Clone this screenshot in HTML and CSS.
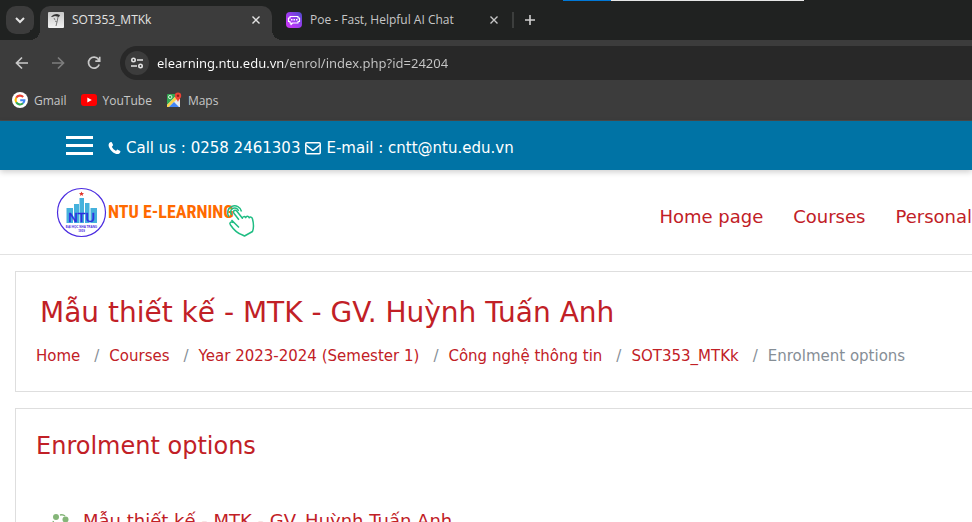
FILE: index.html
```html
<!DOCTYPE html>
<html lang="en">
<head>
<meta charset="utf-8">
<title>SOT353_MTKk</title>
<link rel="stylesheet" href="styles.css">
</head>
<body>
<div class="browser">
  <div class="tabstrip">
    <div class="window-edge"></div>
    <button class="tab-search" aria-label="Search tabs">
      <svg width="12" height="12" viewBox="0 0 12 12" fill="none" stroke="#e3e3e3" stroke-width="2"><path d="M2 4l4 4 4-4"/></svg>
    </button>
    <div class="tab tab-active">
      <svg class="favicon" width="16" height="16" viewBox="0 0 16 16"><defs><linearGradient id="metal" x2="0" y2="1"><stop stop-color="#c8c8c8"/><stop offset="1" stop-color="#f2f2f2"/></linearGradient></defs><rect width="16" height="16" rx="1" fill="url(#metal)"/><path d="M3 5q2-3 6-3l3 1-1 2-4-1-3 1z" fill="#333"/><path d="M6 6l1 2M10 5l-1 5-2-1M9 10l-1 4" stroke="#777" fill="none"/></svg>
      <span class="tab-title">SOT353_MTKk</span>
      <button class="tab-close" aria-label="Close tab"><svg width="8" height="8" viewBox="0 0 8 8" stroke="currentColor" stroke-width="1.4"><path d="M.5.5l7 7M7.500.5l-7 7"/></svg></button>
    </div>
    <div class="tab">
      <svg class="favicon" width="16" height="16" viewBox="0 0 16 16"><defs><linearGradient id="poe" x1="0" y1="1" x2="1" y2="0"><stop stop-color="#d034f5"/><stop offset=".5" stop-color="#9c3cf0"/><stop offset="1" stop-color="#4a4bc8"/></linearGradient></defs><rect width="16" height="16" rx="4" fill="url(#poe)"/><path d="M4 4.500h8v1.500h1.500v3.500H12V11H6.500L5 12.500V11H4V9.500H2.500V6H4z" fill="none" stroke="#fff" stroke-width="1.200" stroke-linejoin="round"/><path d="M5 7.700h1.500M7.500 7.700H9M10 7.700h1.500" stroke="#fff" stroke-width="1.600"/></svg>
      <span class="tab-title">Poe - Fast, Helpful AI Chat</span>
      <button class="tab-close" aria-label="Close tab"><svg width="8" height="8" viewBox="0 0 8 8" stroke="currentColor" stroke-width="1.4"><path d="M.5.5l7 7M7.500.5l-7 7"/></svg></button>
    </div>
    <button class="new-tab" aria-label="New tab"><svg width="10" height="10" viewBox="0 0 10 10" stroke="#d0d0d0" stroke-width="1.600"><path d="M5 0v10M0 5h10"/></svg></button>
  </div>
  <div class="toolbar">
    <button class="tool" aria-label="Back"><svg width="16" height="16" viewBox="0 0 16 16" fill="none" stroke="#c9c9c9" stroke-width="1.700"><path d="M14 8H3M8 2.500L2.500 8 8 13.500"/></svg></button>
    <button class="tool" aria-label="Forward"><svg width="16" height="16" viewBox="0 0 16 16" fill="none" stroke="#7d7d7d" stroke-width="1.700"><path d="M2 8h11M8 2.500L13.500 8 8 13.500"/></svg></button>
    <button class="tool" aria-label="Reload"><svg width="16" height="16" viewBox="0 0 16 16" fill="none" stroke="#c9c9c9" stroke-width="1.700"><path d="M13.200 9.500A5.500 5.500 0 1 1 12.500 4.500L13.500 6M13.700 1.800V6.200H9.300"/></svg></button>
    <div class="omnibox">
      <button class="site-info" aria-label="View site information"><svg width="14" height="14" viewBox="0 0 14 14" fill="none" stroke="#e3e3e3" stroke-width="1.600"><circle cx="3.500" cy="4" r="1.700"/><path d="M7 4h6M1 10h6"/><circle cx="10.500" cy="10" r="1.700"/></svg></button>
      <input class="url" type="text" aria-label="Address" value="elearning.ntu.edu.vn/enrol/index.php?id=24204">
    </div>
  </div>
  <div class="bookmarks">
    <a class="bookmark" href="#"><svg width="16" height="16" viewBox="0 0 16 16" fill="none" stroke-width="2.100"><circle cx="8" cy="8" r="8" fill="#fff"/><path d="M4.200 5.800A4.400 4.400 0 0 1 11.200 5" stroke="#ea4335"/><path d="M4.200 5.800a4.400 4.400 0 0 0 0 4.400" stroke="#fbbc05"/><path d="M4.200 10.200a4.400 4.400 0 0 0 6.800 1.100" stroke="#34a853"/><path d="M11 11.300A4.400 4.400 0 0 0 12.400 8.200H8.200" stroke="#4285f4"/></svg>Gmail</a>
    <a class="bookmark" href="#"><svg width="16" height="16" viewBox="0 0 16 16"><rect y="2" width="16" height="12" rx="3" fill="#f00"/><path d="M6.300 5.500v5L10.800 8z" fill="#fff"/></svg>YouTube</a>
    <a class="bookmark" href="#"><svg width="16" height="16" viewBox="0 0 16 16"><rect x="1" y="2" width="13" height="13" rx="1" fill="#34a853"/><path d="M1 13L12 2h2v13H1z" fill="#e8eaed"/><path d="M1 13L9 5l2 2-8 8H1z" fill="#fbd34c"/><path d="M3 15l5-5 5 5z" fill="#4285f4"/><circle cx="4.200" cy="5" r="1.700" fill="none" stroke="#d5f0dc"/><path d="M8.800 3.800a3.200 3.200 0 0 1 6.400 0c0 2.600-2.400 3.300-3.200 6.200-.8-2.900-3.200-3.600-3.200-6.200z" fill="#ea4335"/><circle cx="12" cy="3.700" r="1.200" fill="#8c1d18"/></svg>Maps</a>
  </div>
</div>

<div class="page">
  <div class="topbar">
    <button class="menu" aria-label="Menu"><span></span><span></span><span></span></button>
    <div class="contact">
      <svg width="13" height="14" viewBox="0 0 13 14"><path d="M1 2.500C1.500 1.500 2.600 1 3.200 1c.4 0 .6.300.8.800l1 2c.3.600-.1.900-.7 1.400-.5.400-.4.700-.2 1.100.8 1.400 1.900 2.500 3.300 3.300.5.300.7.200 1-.2.500-.6.900-1 1.400-.7l2 1c.5.200.6.400.6.800 0 .800-.6 1.800-1.400 2.200-1.300.6-2.600.4-3.900-.2C4.300 11.300 2.500 9.500 1.200 6.600.600 5.200.3 3.800 1 2.500z" fill="#fff"/></svg>
      <span>Call us : 0258 2461303</span>
      <svg width="16" height="14" viewBox="0 0 16 14" fill="none" stroke="#fff" stroke-width="1.500"><rect x=".8" y="1.800" width="14.400" height="11" rx="1"/><path d="M1 4l6 4.800q1 .7 2 0L15 4"/></svg>
      <span>E-mail : cntt@ntu.edu.vn</span>
    </div>
  </div>
  <header class="header">
    <a class="brand" href="#" aria-label="NTU E-Learning">
      <svg width="200" height="52" viewBox="0 0 200 52">
        <circle cx="25.500" cy="25.500" r="24" fill="#fff" stroke="#4a2be0" stroke-width="1.200"/>
        <path d="M10.500 21h6.500v15h-6.500zM18 17h5v19h-5zM23.500 11h4.500v25h-4.500zM29 16h4.500v20H29zM34.500 21h6.500v15h-6.500z" fill="#45b1dc"/>
        <path d="M25.500 4.500l.7 1.600 1.800.1-1.400 1.200.5 1.700-1.600-1-1.600 1 .5-1.700-1.400-1.200 1.800-.1z" fill="#e0352b"/>
        <text x="25.500" y="35" class="seal-name">NTU</text>
        <text x="25.500" y="40.500" class="seal-small">ĐẠI HỌC NHA TRANG</text>
        <text x="25.500" y="45" class="seal-small">1959</text>
        <text x="52" y="31" class="brand-text">NTU E-LEARNING</text>
        <g fill="none" stroke="#1fbd83" stroke-width="1.500" stroke-linejoin="round">
          <path d="M183 40.500l-7.500-7.500M177.500 35.500c-3-1.500-4.500.5-3 2.500 3 4.500 7 8.500 12 10l2 1 8-4.500c1.500-4 1.200-8 0-12.500-.5-2-2.400-2.600-3.300-1.200-.9-2-2.700-2-3.500-.2-1.100-1.600-3-1.200-3.300.6l-5.500-7c-1.500-2-4.500-.5-3 2l5 6.500"/>
          <path d="M173 30a7 7 0 1 1 12.500-5.500M176 28a4 4 0 1 1 6.500-4"/>
        </g>
      </svg>
    </a>
    <nav class="nav"><a href="#">Home page</a><a href="#">Courses</a><a href="#">Personal</a></nav>
  </header>
  <main class="content">
    <section class="card">
      <h1>Mẫu thiết kế - MTK - GV. Huỳnh Tuấn Anh</h1>
      <ol class="breadcrumb">
        <li><a href="#">Home</a></li>
        <li><a href="#">Courses</a></li>
        <li><a href="#">Year 2023-2024 (Semester 1)</a></li>
        <li><a href="#">Công nghệ thông tin</a></li>
        <li><a href="#">SOT353_MTKk</a></li>
        <li>Enrolment options</li>
      </ol>
    </section>
    <section class="card">
      <h2>Enrolment options</h2>
      <h3 class="course"><svg width="18" height="18" viewBox="0 0 18 18" fill="#84b578"><circle cx="4" cy="5" r="3"/><circle cx="13.500" cy="7.500" r="3"/><circle cx="5" cy="14" r="3"/><path d="M8 3q3-1 5 1M1.500 9q-1 2 .5 4M9 15q4 0 5-4" fill="none" stroke="#84b578" stroke-width="1.500"/></svg><a href="#">Mẫu thiết kế - MTK - GV. Huỳnh Tuấn Anh</a></h3>
    </section>
  </main>
</div>
</body>
</html>
```
FILE: styles.css
```css
* { box-sizing: border-box; }
html, body { height: 100%; }
body {
  margin: 0;
  overflow: hidden;
  display: flex;
  flex-direction: column;
  background: #fff;
  font-family: "DejaVu Sans", Verdana, sans-serif;
}
button { border: 0; padding: 0; background: none; display: flex; align-items: center; justify-content: center; }
a { text-decoration: none; color: #c12026; }
svg { display: block; flex: none; }

/* Browser frame */
.browser {
  flex: none;
  background: #3c3c3c;
  border-bottom: 1px solid #4a4a4a;
  font-family: "Open Sans", "Noto Sans", sans-serif;
  font-size: 12px;
  color: #e3e3e3;
}
.tabstrip {
  position: relative;
  display: flex;
  align-items: center;
  height: 40px;
  padding: 0 6px;
  background: #202221;
}
.window-edge {
  position: absolute;
  top: 0;
  left: 58%;
  right: 17%;
  margin-left: -1px;
  margin-right: 3px;
  height: 1px;
  background: linear-gradient(90deg, #0078d7 20%, #e6e6e6 20%);
}
.tab-search { width: 28px; height: 28px; border-radius: 10px; background: #3c3c3c; }
.tab {
  position: relative;
  display: flex;
  align-items: center;
  width: 232px;
  height: 34px;
  padding: 0 12px 6px 8px;
  margin: 6px 0 0 6px;
  color: #c7c7c7;
}
.tab-active { background: #3c3c3c; border-radius: 10px 10px 0 0; color: #e3e3e3; }
.tab-active::before, .tab-active::after {
  content: "";
  position: absolute;
  bottom: 0;
  width: 10px;
  height: 10px;
}
.tab-active::before { right: 100%; background: radial-gradient(circle at 0 0, #202221 10px, #3c3c3c 10px); }
.tab-active::after { left: 100%; background: radial-gradient(circle at 100% 0, #202221 10px, #3c3c3c 10px); }
.tab-title { flex: 1; margin-left: 8px; font-size: 12px; line-height: 16px; white-space: nowrap; }
.tab-close { color: inherit; }
.new-tab { height: 16px; padding-left: 11px; margin-left: 2px; border-left: 2px solid #3c3e3d; }

.toolbar { display: flex; align-items: center; gap: 20px; padding: 6px 0 6px 14px; }
.omnibox {
  flex: 1;
  display: flex;
  align-items: center;
  height: 34px;
  margin-left: -2px;
  padding-left: 5px;
  border-radius: 17px 0 0 17px;
  background: #282828;
}
.site-info { width: 24px; height: 24px; border-radius: 12px; background: #3c3c3c; }
.url {
  flex: 1;
  min-width: 0;
  margin-left: 8px;
  padding: 0;
  border: 0;
  outline: 0;
  color: transparent;
  background: linear-gradient(90deg, #fff 126px, #c7c7c7 126px);
  -webkit-background-clip: text;
  background-clip: text;
  font: 13px/20px "Noto Sans", "Open Sans", sans-serif;
}
.bookmarks { display: flex; gap: 14px; height: 34px; padding: 0 12px 6px; }
.bookmark { display: flex; align-items: center; gap: 6px; color: #c7c7c7; }

/* Page */
.page { flex: 1; min-height: 0; display: flex; flex-direction: column; }
.topbar {
  position: relative;
  flex: none;
  display: flex;
  align-items: center;
  height: 49px;
  padding-left: 66px;
  background: #0073a5;
  box-shadow: 0 2px 6px rgba(0, 0, 0, .2);
  color: #fff;
}
.menu { flex-direction: column; gap: 5px; width: 27px; }
.menu span { width: 100%; height: 3px; background: #fff; }
.contact { display: flex; align-items: center; gap: 5px; margin-left: 15px; padding-top: 4px; font-size: 15px; line-height: 20px; white-space: nowrap; }

.header {
  flex: none;
  display: flex;
  align-items: center;
  height: 85px;
  padding: 2px 0 0 56px;
  border-bottom: 1px solid #e2e2e2;
}
.seal-name { font: 13px "Liberation Sans", sans-serif; fill: #2b2be0; stroke: #2b2be0; stroke-width: .5px; text-anchor: middle; }
.seal-small { font: bold 3px "Liberation Sans", sans-serif; fill: #4a2be0; text-anchor: middle; }
.brand-text { font: bold 18px "Roboto Condensed", "Liberation Sans Narrow", "Liberation Sans", sans-serif; fill: #ff6a00; }
.nav { display: flex; gap: 30px; margin-left: auto; padding-top: 8px; font-size: 18px; line-height: 24px; white-space: nowrap; }

.content { padding: 16px 0 0 15px; }
.card { margin-bottom: 16px; padding: 20px; border: 1px solid #dedede; border-right: 0; }
h1, h2, h3 { margin: 0; font-weight: 400; color: #c12026; white-space: nowrap; }
h1 { padding-left: 4px; font-size: 28px; line-height: 42px; }
.breadcrumb { display: flex; margin: 10px 0 3px; padding: 0; list-style: none; font-size: 15px; line-height: 24px; color: #868e96; white-space: nowrap; }
.breadcrumb li + li::before { content: "/"; padding: 0 10px 0 14px; color: #868e96; }
h2 { margin-top: 2px; font-size: 24px; line-height: 30px; }
.course { display: flex; align-items: center; gap: 13px; margin: 46px 0 0 16px; font-size: 18px; line-height: 28px; }
```
